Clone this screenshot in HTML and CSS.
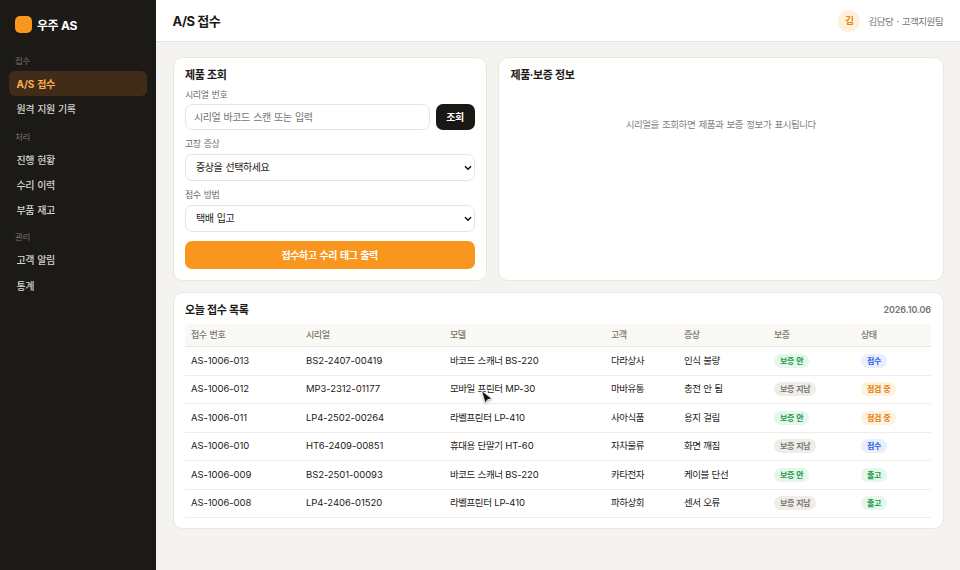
FILE: index.html
```
<!DOCTYPE html>
<html lang="ko">
<head>
    <meta charset="UTF-8">
    <meta name="viewport" content="width=device-width, initial-scale=1.0">
    <title>우주 AS</title>
    <link rel="stylesheet" href="styles.css">
</head>
<body>
    <aside class="sidebar">
        <div class="brand"><span class="brand-mark"></span><span>우주 AS</span></div>
        <nav>
            <div class="nav-label">접수</div>
            <a class="nav-item active"><span class="num">A/S</span> 접수</a>
            <a class="nav-item">원격 지원 기록</a>
            <div class="nav-label">처리</div>
            <a class="nav-item">진행 현황</a>
            <a class="nav-item">수리 이력</a>
            <a class="nav-item">부품 재고</a>
            <div class="nav-label">관리</div>
            <a class="nav-item">고객 알림</a>
            <a class="nav-item">통계</a>
        </nav>
    </aside>

    <div class="page">
        <header class="topbar">
            <h1>A/S 접수</h1>
            <div class="user">
                <span class="avatar">김</span>
                <span>김담당 · 고객지원팀</span>
            </div>
        </header>

        <main class="content">
            <div class="panels">
                <section class="card">
                    <h2>제품 조회</h2>
                    <label class="field-label">시리얼 번호</label>
                    <div class="search-row">
                        <input class="control" type="text" placeholder="시리얼 바코드 스캔 또는 입력">
                        <button class="btn-dark">조회</button>
                    </div>
                    <label class="field-label">고장 증상</label>
                    <div class="select-wrap">
                        <select class="control select">
                            <option>증상을 선택하세요</option>
                        </select>
                        <svg class="chevron" width="8" height="6" viewBox="0 0 8 6"><path d="M1 1.2 L4 4.2 L7 1.2" fill="none" stroke="#111" stroke-width="1.6"/></svg>
                    </div>
                    <label class="field-label">접수 방법</label>
                    <div class="select-wrap">
                        <select class="control select">
                            <option>택배 입고</option>
                        </select>
                        <svg class="chevron" width="8" height="6" viewBox="0 0 8 6"><path d="M1 1.2 L4 4.2 L7 1.2" fill="none" stroke="#111" stroke-width="1.6"/></svg>
                    </div>
                    <button class="btn-primary">접수하고 수리 태그 출력</button>
                </section>

                <section class="card">
                    <h2>제품·보증 정보</h2>
                    <p class="empty">시리얼을 조회하면 제품과 보증 정보가 표시됩니다</p>
                </section>
            </div>

            <section class="card list-card">
                <div class="list-head">
                    <h2>오늘 접수 목록</h2>
                    <span class="date">2026.10.06</span>
                </div>
                <table>
                    <colgroup>
                        <col class="col-id"><col class="col-serial"><col class="col-model"><col class="col-customer"><col class="col-symptom"><col class="col-warranty"><col>
                    </colgroup>
                    <thead>
                        <tr><th>접수 번호</th><th>시리얼</th><th>모델</th><th>고객</th><th>증상</th><th>보증</th><th>상태</th></tr>
                    </thead>
                    <tbody>
                        <tr>
                            <td class="num">AS-1006-013</td><td class="num">BS2-2407-00419</td><td>바코드 스캐너 <span class="num">BS-220</span></td><td>다라상사</td><td>인식 불량</td>
                            <td><span class="badge green">보증 안</span></td><td><span class="badge blue">접수</span></td>
                        </tr>
                        <tr>
                            <td class="num">AS-1006-012</td><td class="num">MP3-2312-01177</td><td>모바일 프린터 <span class="num">MP-30</span></td><td>마바유통</td><td>충전 안 됨</td>
                            <td><span class="badge gray">보증 지남</span></td><td><span class="badge orange">점검 중</span></td>
                        </tr>
                        <tr>
                            <td class="num">AS-1006-011</td><td class="num">LP4-2502-00264</td><td>라벨프린터 <span class="num">LP-410</span></td><td>사아식품</td><td>용지 걸림</td>
                            <td><span class="badge green">보증 안</span></td><td><span class="badge orange">점검 중</span></td>
                        </tr>
                        <tr>
                            <td class="num">AS-1006-010</td><td class="num">HT6-2409-00851</td><td>휴대용 단말기 <span class="num">HT-60</span></td><td>자차물류</td><td>화면 깨짐</td>
                            <td><span class="badge gray">보증 지남</span></td><td><span class="badge blue">접수</span></td>
                        </tr>
                        <tr>
                            <td class="num">AS-1006-009</td><td class="num">BS2-2501-00093</td><td>바코드 스캐너 <span class="num">BS-220</span></td><td>카타전자</td><td>케이블 단선</td>
                            <td><span class="badge green">보증 안</span></td><td><span class="badge green">출고</span></td>
                        </tr>
                        <tr>
                            <td class="num">AS-1006-008</td><td class="num">LP4-2406-01520</td><td>라벨프린터 <span class="num">LP-410</span></td><td>파하상회</td><td>센서 오류</td>
                            <td><span class="badge gray">보증 지남</span></td><td><span class="badge green">출고</span></td>
                        </tr>
                    </tbody>
                </table>
            </section>
        </main>
    </div>

    <svg class="cursor" width="16" height="18" viewBox="0 0 16 18">
        <path d="M1.5 1.5 L5.2 14.2 L7.7 10.6 L12 9.8 Z" fill="#111" stroke="#fff" stroke-width="0.8" stroke-linejoin="round"/>
    </svg>
</body>
</html>
```
FILE: styles.css
```
* {
    box-sizing: border-box;
}
body {
    margin: 0;
    height: 570px;
    display: flex;
    overflow: hidden;
    background: #f4f3f0;
    color: #1c1a17;
    font-family: Inter, "Noto Sans CJK KR", sans-serif;
    font-size: 10px;
    letter-spacing: -0.45px;
    word-spacing: 1px;
}
h1, h2, p {
    margin: 0;
}
input, select, button {
    font: inherit;
    letter-spacing: inherit;
    word-spacing: inherit;
}

/* Sidebar */
.sidebar {
    width: 156px;
    flex: none;
    padding: 14px 9px;
    background: #1c1a16;
    color: #d6d3cd;
}
.brand {
    display: flex;
    align-items: center;
    gap: 5px;
    height: 21px;
    padding-left: 6px;
    color: #fff;
    font-size: 12px;
    font-weight: 700;
    word-spacing: 0.5px;
}
.brand-mark {
    width: 17px;
    height: 17px;
    border-radius: 5px;
    background: #f8961e;
}
nav {
    padding-top: 11px;
}
.nav-label {
    height: 25px;
    padding: 9px 6px 0;
    line-height: 13px;
    font-size: 8.5px;
    letter-spacing: -0.4px;
    color: #79756e;
}
.nav-item {
    display: block;
    height: 25.3px;
    padding: 0 7.5px;
    line-height: 26px;
    border-radius: 6px;
    font-size: 10px;
    font-weight: 500;
}
.nav-item.active {
    background: #412c18;
    color: #ffad4d;
    font-weight: 700;
}

/* Top bar */
.page {
    flex: 1;
    min-width: 0;
}
.topbar {
    display: flex;
    align-items: center;
    justify-content: space-between;
    height: 42px;
    padding: 0 17px 0 16.5px;
    background: #fff;
    border-bottom: 1px solid #e8e6e2;
}
h1 {
    font-size: 13px;
    font-weight: 700;
    word-spacing: 0;
}
.user {
    display: flex;
    align-items: center;
    gap: 8px;
    font-size: 9.5px;
    letter-spacing: -0.5px;
    color: #79756f;
}
.avatar {
    width: 22px;
    height: 22px;
    border-radius: 50%;
    background: #fff0dc;
    color: #ea8215;
    font-weight: 700;
    line-height: 22px;
    text-align: center;
}

/* Cards */
.content {
    padding: 15px 16.5px 0 16.5px;
}
.panels {
    display: grid;
    grid-template-columns: 314.5px 1fr;
    gap: 11px;
    height: 223.5px;
}
.card {
    padding: 9px 11.5px;
    background: #fff;
    border: 1px solid #eae7e3;
    border-radius: 10px;
}
h2 {
    height: 17px;
    line-height: 17px;
    font-size: 11px;
    font-weight: 700;
    word-spacing: 0.5px;
}
.field-label {
    display: block;
    height: 20.5px;
    padding-top: 2.5px;
    line-height: 15px;
    font-size: 9px;
    color: #6d6963;
}
.control {
    display: block;
    width: 100%;
    height: 26px;
    padding: 0 8px;
    border: 1px solid #e8e5e0;
    border-radius: 7px;
    background: #fff;
    color: #1c1a17;
}
.control::placeholder {
    color: #77736d;
}
.search-row {
    display: flex;
    gap: 6px;
    margin: -1px 0 4px;
}
.search-row .control {
    flex: 1;
    min-width: 0;
}
.btn-dark {
    width: 39px;
    padding: 0 0 1px;
    border: 0;
    border-radius: 7px;
    background: #1a1814;
    color: #fff;
    font-weight: 700;
}
.select-wrap {
    position: relative;
    margin-bottom: 3.5px;
}
.select {
    height: 27px;
    padding: 0 10px 1px;
    appearance: none;
}
.chevron {
    position: absolute;
    right: 3px;
    top: 11px;
}
.btn-primary {
    display: block;
    width: 100%;
    height: 28.5px;
    margin-top: 8.5px;
    padding-bottom: 2px;
    border: 0;
    border-radius: 7px;
    background: #f8961e;
    color: #fff;
    font-weight: 700;
}
.empty {
    margin-top: 33px;
    line-height: 16px;
    text-align: center;
    font-size: 9.5px;
    color: #85817b;
}

/* Intake list */
.list-card {
    height: 237px;
    margin-top: 11px;
}
.list-head {
    display: flex;
    justify-content: space-between;
    height: 22px;
}
.date {
    line-height: 15px;
    font-size: 9px;
    font-weight: 600;
    letter-spacing: -0.1px;
    color: #79756f;
}
table {
    width: 100%;
    table-layout: fixed;
    border-collapse: separate;
    border-spacing: 0;
}
.col-id { width: 115px; }
.col-serial { width: 144px; }
.col-model { width: 161px; }
.col-customer { width: 73px; }
.col-symptom { width: 90px; }
.col-warranty { width: 87px; }
th, td {
    padding: 0 6px;
    text-align: left;
    white-space: nowrap;
}
th {
    height: 23.5px;
    background: #f9f8f5;
    border-bottom: 1px solid #e8e6e1;
    font-size: 9px;
    font-weight: 500;
    color: #79756f;
}
th:first-child {
    border-top-left-radius: 5px;
}
th:last-child {
    border-top-right-radius: 5px;
}
td {
    height: 28.5px;
    line-height: 14px;
    border-bottom: 1px solid #efedea;
    font-size: 9.5px;
    word-spacing: 0.5px;
}
td.num, .num {
    letter-spacing: -0.07px;
}
.badge {
    display: inline-block;
    height: 14px;
    padding: 0 6px;
    line-height: 14px;
    border-radius: 7px;
    font-size: 8px;
    font-weight: 700;
    letter-spacing: -0.35px;
    word-spacing: 0.7px;
    vertical-align: middle;
}
.green { background: #e4f7ea; color: #23984f; }
.gray { background: #efedea; color: #7a756e; }
.blue { background: #e9effe; color: #315fdf; }
.orange { background: #fff2dc; color: #df7b12; }

.cursor {
    position: absolute;
    left: 480px;
    top: 389px;
    filter: drop-shadow(0 1px 1px rgba(0, 0, 0, 0.3));
}
```
